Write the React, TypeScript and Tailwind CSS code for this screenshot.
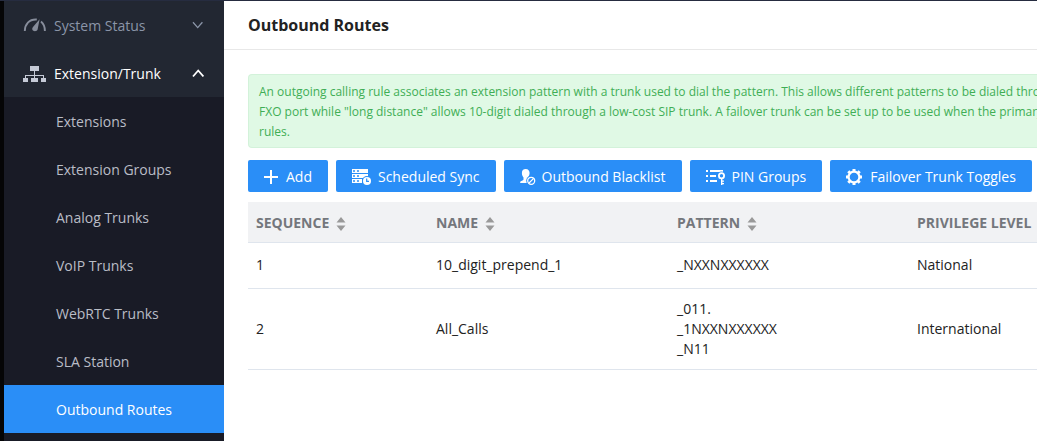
import type { ReactNode } from "react";

const submenu = [
  "Extensions",
  "Extension Groups",
  "Analog Trunks",
  "VoIP Trunks",
  "WebRTC Trunks",
  "SLA Station",
  "Outbound Routes",
];

const routes = [
  { sequence: 1, name: "10_digit_prepend_1", patterns: ["_NXXNXXXXXX"], level: "National" },
  { sequence: 2, name: "All_Calls", patterns: ["_011.", "_1NXXNXXXXXX", "_N11"], level: "International" },
];

function GaugeIcon() {
  return (
    <svg width="24" height="16" viewBox="0 0 24 16" fill="none" aria-hidden="true">
      <path d="M2.8 13C2.8 6.5 7 1 14.8 1.5" stroke="#878d9b" strokeWidth="1.9" />
      <path d="M19 3.6C21.6 5.8 22.9 9 22.9 13" stroke="#878d9b" strokeWidth="1.9" />
      <path d="M17.6 1.2L15.6 11.6C15 13.8 11 14 10.3 11.6C10 10.3 10.8 9.2 11.6 8.3Z" fill="#878d9b" />
    </svg>
  );
}

function TreeIcon() {
  return (
    <svg width="24" height="16" viewBox="0 0 24 16" fill="#c5cad6" aria-hidden="true">
      <path d="M8 0h9v5H8zM12 5h1v4h-1zM3 9h19v1H3zM3 9h1v3H3zM12 9h1v3h-1zM21 9h1v3h-1zM1 12h5v4H1zM9 12h7v4H9zM19 12h5v4h-5z" />
    </svg>
  );
}

function Chevron({ up = false }: { up?: boolean }) {
  return (
    <svg width="12" height="10" viewBox="0 0 12 10" fill="none" stroke="currentColor" aria-hidden="true">
      {up ? <path d="M1 7.5L6.2 1.5L11.4 7.5" strokeWidth="1.8" /> : <path d="M1 1.2L5.7 6.6L10.4 1.2" strokeWidth="1.3" />}
    </svg>
  );
}

function PlusIcon() {
  return (
    <svg width="14" height="14" viewBox="0 0 14 14" fill="#fff" aria-hidden="true">
      <path d="M6 0h2v14H6zM0 6h14v2H0z" />
    </svg>
  );
}

function ScheduleIcon() {
  return (
    <svg width="18" height="16" viewBox="0 0 18 16" className="overflow-visible" aria-hidden="true">
      <path d="M0 0h16v4H0zM0 5h16v4H0zM0 10h10v4H0z" fill="#fff" />
      <path d="M1 1.3h2v1.5H1zM5 1.3h2v1.5H5zM1 6.3h2v1.5H1zM5 6.3h2v1.5H5zM1 11.3h2v1.5H1zM5 11.3h2v1.5H5z" fill="#2a8ef7" />
      <circle cx="15" cy="12" r="5" fill="#2a8ef7" />
      <circle cx="15" cy="12" r="4" fill="#fff" />
      <path d="M14.7 9.6v2.7H17" stroke="#2a8ef7" strokeWidth="1.2" fill="none" />
    </svg>
  );
}

function BlacklistIcon() {
  return (
    <svg width="14" height="16" viewBox="0 0 14 16" fill="none" className="overflow-visible" aria-hidden="true">
      <path d="M5.7 0C8.3 0 9.6 1.7 9.6 4C9.6 6 8.8 7.3 8 8.2V10L10 14H0.2C0 12.6 1 12.1 2.4 11.6C3.3 11.3 3.5 11 3.5 10V8.4C2.5 7.3 1.9 6 1.9 4C1.9 1.5 3.2 0 5.7 0Z" fill="#fff" />
      <circle cx="11.2" cy="11.8" r="5" fill="#2a8ef7" />
      <circle cx="11.2" cy="11.8" r="3.5" stroke="#fff" strokeWidth="1.3" />
      <path d="M8.8 14.2L13.6 9.4" stroke="#fff" strokeWidth="1.3" />
    </svg>
  );
}

function PinIcon() {
  return (
    <svg width="18" height="16" viewBox="0 0 18 16" fill="none" className="overflow-visible" aria-hidden="true">
      <path d="M0 1h2v2H0zM4 1h13v2H4zM0 6h2v2H0zM4 6h6v2H4zM0 11h2v2H0zM4 11h7v2H4z" fill="#fff" />
      <circle cx="15.5" cy="6.8" r="4.3" fill="#2a8ef7" />
      <circle cx="15.5" cy="6.8" r="2.6" stroke="#fff" strokeWidth="1.8" />
      <path d="M15 10h1.4v6H15zM16 11.6h2v1.2h-2zM16 14h2v1.3h-2z" fill="#fff" />
    </svg>
  );
}

function GearIcon() {
  return (
    <svg width="16" height="16" viewBox="0 0 16 16" fill="none" stroke="#fff" aria-hidden="true">
      <circle cx="8" cy="8" r="5.4" strokeWidth="2.2" />
      <path
        d="M8 0V3M8 13V16M0 8H3M13 8H16M2.3 2.3L4.2 4.2M11.8 11.8L13.7 13.7M2.3 13.7L4.2 11.8M11.8 4.2L13.7 2.3"
        strokeWidth="3"
      />
    </svg>
  );
}

function SortIcon() {
  return (
    <svg width="10" height="14" viewBox="0 0 10 14" fill="#999" aria-hidden="true">
      <path d="M5 0L9.5 5.5H0.5ZM0.5 8.5H9.5L5 14Z" />
    </svg>
  );
}

function ActionButton({ icon, children }: { icon: ReactNode; children: ReactNode }) {
  return (
    <button
      type="button"
      className="flex h-8 shrink-0 items-center gap-2 rounded-xs bg-[#2a8ef7] px-4 pt-0.5 text-sm whitespace-nowrap text-white"
    >
      {icon}
      {children}
    </button>
  );
}

function HeaderCell({ children, sortable = false }: { children: ReactNode; sortable?: boolean }) {
  return (
    <th scope="col" className="h-10 pt-0.5 pl-2 text-left font-bold whitespace-nowrap">
      <span className="flex items-center gap-[7px]">
        {children}
        {sortable && (
          <button type="button" aria-label="Sort" className="pt-0.5">
            <SortIcon />
          </button>
        )}
      </span>
    </th>
  );
}

export default function App() {
  return (
    <div className="flex min-h-screen overflow-hidden border-t border-[#262c40] bg-white font-['Open_Sans','Noto_Sans',sans-serif] text-sm leading-5 text-[#222]">
      <nav className="w-56 shrink-0 border-l-4 border-[#050506] bg-[#191b26]">
        <div className="bg-[#222732]">
          <button type="button" className="flex h-12 w-full items-center gap-2 pt-0.5 pr-5 pl-[18px] text-[#8b95a8]">
            <GaugeIcon />
            <span className="grow text-left">System Status</span>
            <Chevron />
          </button>
          <button type="button" aria-expanded="true" className="flex h-12 w-full items-center gap-2 pt-0.5 pr-5 pl-[18px] text-white">
            <TreeIcon />
            <span className="grow text-left">Extension/Trunk</span>
            <Chevron up />
          </button>
        </div>
        <ul>
          {submenu.map((item) => (
            <li key={item}>
              <a
                href="#"
                className={
                  item === "Outbound Routes"
                    ? "flex h-12 items-center bg-[#2a8ef7] pt-0.5 pl-[52px] text-white"
                    : "flex h-12 items-center pt-0.5 pl-[52px] text-[#b9bdc6]"
                }
              >
                {item}
              </a>
            </li>
          ))}
        </ul>
      </nav>

      <main className="min-w-0 grow overflow-hidden">
        <header className="flex h-[49px] items-center border-b border-[#e8e8e8] pl-6">
          <h1 className="text-base font-bold">Outbound Routes</h1>
        </header>
        <div className="flex flex-col pt-6 pl-6">
          <p className="overflow-hidden rounded-l border border-r-0 border-[#d3f2da] bg-[#e0f9e5] px-[10px] pt-[7px] pb-[5px] text-xs leading-5 whitespace-nowrap text-[#3fae55]">
            An outgoing calling rule associates an extension pattern with a trunk used to dial the pattern. This allows
            different patterns to be dialed through
            <br />
            FXO port while "long distance" allows 10-digit dialed through a low-cost SIP trunk. A failover trunk can be
            set up to be used when the primary
            <br />
            rules.
          </p>
          <div className="flex gap-2 pt-3">
            <ActionButton icon={<PlusIcon />}>Add</ActionButton>
            <ActionButton icon={<ScheduleIcon />}>Scheduled Sync</ActionButton>
            <ActionButton icon={<BlacklistIcon />}>Outbound Blacklist</ActionButton>
            <ActionButton icon={<PinIcon />}>PIN Groups</ActionButton>
            <ActionButton icon={<GearIcon />}>Failover Trunk Toggles</ActionButton>
          </div>
          <table className="mt-[10px] w-full table-fixed">
            <colgroup>
              <col className="w-[180px]" />
              <col className="w-[241px]" />
              <col className="w-[240px]" />
              <col />
            </colgroup>
            <thead>
              <tr className="border-b border-[#dfe5ed] bg-[#f1f2f4] text-[#74777c]">
                <HeaderCell sortable>SEQUENCE</HeaderCell>
                <HeaderCell sortable>NAME</HeaderCell>
                <HeaderCell sortable>PATTERN</HeaderCell>
                <HeaderCell>PRIVILEGE LEVEL</HeaderCell>
              </tr>
            </thead>
            <tbody>
              {routes.map((route) => (
                <tr key={route.sequence} className="h-[46px] border-b border-[#dfe5ed]">
                  <td className="py-[10px] pl-2">{route.sequence}</td>
                  <td className="py-[10px] pl-2">{route.name}</td>
                  <td className="py-[10px] pl-2">
                    {route.patterns.map((pattern) => (
                      <div key={pattern}>{pattern}</div>
                    ))}
                  </td>
                  <td className="py-[10px] pl-2">{route.level}</td>
                </tr>
              ))}
            </tbody>
          </table>
        </div>
      </main>
    </div>
  );
}
